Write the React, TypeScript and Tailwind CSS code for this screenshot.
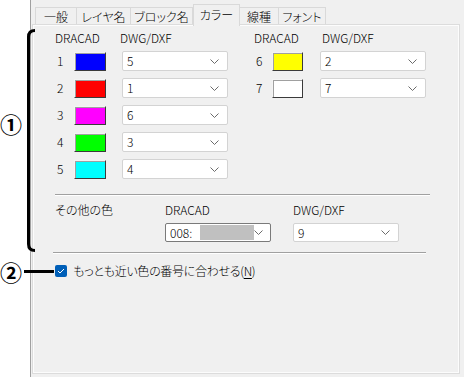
const FONT = "font-['Noto_Sans_CJK_JP','Noto_Sans',sans-serif] [font-feature-settings:'palt']";

type Row = { no: number; fill: string; value: string };

const LEFT_ROWS: Row[] = [
  { no: 1, fill: "bg-[#0000ff]", value: "5" },
  { no: 2, fill: "bg-[#ff0000]", value: "1" },
  { no: 3, fill: "bg-[#ff00ff]", value: "6" },
  { no: 4, fill: "bg-[#00ff00]", value: "3" },
  { no: 5, fill: "bg-[#00ffff]", value: "4" },
];

const RIGHT_ROWS: Row[] = [
  { no: 6, fill: "bg-[#ffff00]", value: "2" },
  { no: 7, fill: "bg-white", value: "7" },
];

function Chevron() {
  return (
    <svg width="9" height="5" viewBox="0 0 9 5" className="shrink-0">
      <polyline points="0.5,0.5 4.5,4.5 8.5,0.5" fill="none" stroke="#6b6b6b" strokeWidth="1" />
    </svg>
  );
}

function Combo({ children, focused = false, w = "w-[106px]", h = "h-[20px]" }: { children: React.ReactNode; focused?: boolean; w?: string; h?: string }) {
  return (
    <div
      className={`${w} ${h} flex items-center justify-between rounded-[2px] border bg-white pl-[4px] pr-[8px] text-[12px] leading-none text-black ${
        focused ? "border-[#7a7a7a]" : "border-[#d3d3d3]"
      }`}
    >
      <div className="flex items-center">{children}</div>
      <Chevron />
    </div>
  );
}

function Swatch({ fill, w }: { fill: string; w: string }) {
  return (
    <div className={`${w} flex h-[19px] border border-t-[#f4f4f4] border-l-[#f4f4f4] border-r-[#3a3a3a] border-b-[#3a3a3a]`}>
      <div className={`flex-1 border-l border-t border-[#a0a0a0] ${fill}`} />
    </div>
  );
}

function ColorColumn({ rows, labelW, swatchW, gap, dwgOffset }: { rows: Row[]; labelW: string; swatchW: string; gap: string; dwgOffset: string }) {
  return (
    <div className="flex flex-col">
      <div className="flex h-[14px] items-center text-[12px] leading-none">
        <span className={dwgOffset}>DRACAD</span>
        <span>DWG/DXF</span>
      </div>
      <div className="mt-[6px] flex flex-col gap-[7px]">
        {rows.map((r) => (
          <div key={r.no} className="flex h-[20px] items-center">
            <span className={`${labelW} pl-[2px] text-[12px] leading-none`}>{r.no}</span>
            <Swatch fill={r.fill} w={swatchW} />
            <div className={gap} />
            <Combo>{r.value}</Combo>
          </div>
        ))}
      </div>
    </div>
  );
}

const TABS = [
  { label: "一般", w: "w-[42px]" },
  { label: "レイヤ名", w: "w-[55px]" },
  { label: "ブロック名", w: "w-[63px]" },
  { label: "カラー", w: "w-[47px]", active: true },
  { label: "線種", w: "w-[40px]" },
  { label: "フォント", w: "w-[48px]" },
];

export default function App() {
  return (
    <div className={`relative flex h-[377px] w-[464px] overflow-hidden bg-white font-light text-black ${FONT}`}>
      <div className="w-[30px] shrink-0" />

      <div className="flex flex-1 flex-col border-l border-[#a0a0a0] bg-[#f0f0f0]">
        <div className="flex h-[25px] items-end pl-[4px]">
          {TABS.map((t) =>
            t.active ? (
              <div
                key={t.label}
                className={`${t.w} relative z-10 -mb-px flex h-[22px] items-center justify-center border border-b-0 border-[#d9d9d9] bg-[#f0f0f0] pb-[2px] text-[12px] leading-none`}
              >
                {t.label}
              </div>
            ) : (
              <div
                key={t.label}
                className={`${t.w} -ml-px flex h-[18px] items-center justify-center border border-b-0 border-[#d9d9d9] bg-[#f0f0f0] text-[12px] leading-none first:ml-0`}
              >
                {t.label}
              </div>
            )
          )}
        </div>

        <div className="flex flex-1 pb-[4px] pl-[2px] pr-[5px]">
          <div className="flex h-[348px] w-[426px] flex-col border border-[#fcfcfc] shadow-[0_0_0_1px_#dcdcdc] pl-[21px] pt-[5px]">
            <div className="flex gap-[26px]">
              <ColorColumn rows={LEFT_ROWS} labelW="w-[19px]" swatchW="w-[32px]" gap="w-[16px]" dwgOffset="w-[65px]" />
              <ColorColumn rows={RIGHT_ROWS} labelW="w-[18px]" swatchW="w-[31px]" gap="w-[17px]" dwgOffset="w-[68px]" />
            </div>

            <div className="mt-[15px] w-[375px] border-t border-b border-t-[#a0a0a0] border-b-white" />

            <div className="mt-[7px] flex">
              <div className="h-[14px] w-[110px] text-[12px] leading-[14px]">その他の色</div>
              <div className="flex w-[128px] flex-col">
                <div className="h-[14px] text-[12px] leading-[14px]">DRACAD</div>
                <div className="mt-[6px]">
                  <Combo focused h="h-[19px]">
                    <span>008:</span>
                    <span className="ml-[8px] h-[15px] w-[54px] bg-[#c0c0c0]" />
                  </Combo>
                </div>
              </div>
              <div className="flex flex-col">
                <div className="h-[14px] text-[12px] leading-[14px]">DWG/DXF</div>
                <div className="mt-[6px]">
                  <Combo h="h-[19px]">9</Combo>
                </div>
              </div>
            </div>

            <div className="-ml-[2px] mt-[10px] w-[373px] border-t border-b border-t-[#a0a0a0] border-b-white" />

            <label className="mt-[11px] flex items-center gap-[6px]">
              <span className="flex h-[12px] w-[12px] items-center justify-center rounded-[2px] bg-[#005fb8]">
                <svg width="8" height="6" viewBox="0 0 8 6">
                  <polyline points="1,3 3,5 7,1" fill="none" stroke="white" strokeWidth="1" />
                </svg>
              </span>
              <span className="text-[12px] leading-none tracking-[-0.3px]">
                もっとも近い色の番号に合わせる(<span className="underline underline-offset-2">N</span>)
              </span>
            </label>
          </div>
        </div>
      </div>

      {/* annotations */}
      <svg className="absolute left-0 top-0" width="40" height="260" viewBox="0 0 40 260">
        <path d="M35 30.5 Q28.5 30.5 28.5 37 V244 Q28.5 250.5 35 250.5" fill="none" stroke="black" strokeWidth="3" />
      </svg>
      <span className="absolute left-0 top-[111px] text-[22px] font-bold leading-[24px]">①</span>
      <span className="absolute left-0 top-[259px] text-[22px] font-bold leading-[24px]">②</span>
      <div className="absolute left-[24px] top-[270px] h-[3px] w-[30px] bg-black" />
    </div>
  );
}
